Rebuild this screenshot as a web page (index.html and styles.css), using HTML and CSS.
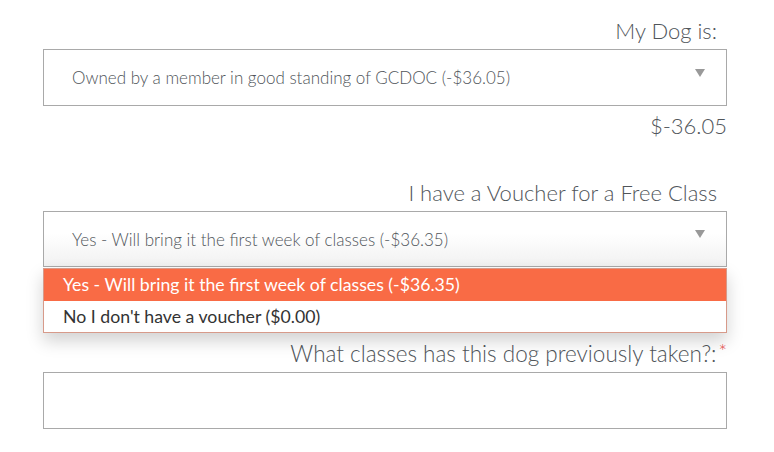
FILE: index.html
```html
<!DOCTYPE html>
<html lang="en">
<head>
    <meta charset="UTF-8">
    <title>Class Registration</title>
    <link rel="stylesheet" href="styles.css">
</head>
<body>

<div class="form">
    <div class="field">
        <div class="field-label">My Dog is:</div>
        <div class="select">
            <span>Owned by a member in good standing of GCDOC (-$36.05)</span>
            <span class="arrow"></span>
        </div>
        <div class="price">$-36.05</div>
    </div>

    <div class="field">
        <div class="field-label">I have a Voucher for a Free Class</div>
        <div class="select-wrap">
            <div class="select open">
                <span>Yes - Will bring it the first week of classes (-$36.35)</span>
                <span class="arrow"></span>
            </div>
            <ul class="options">
                <li class="selected">Yes - Will bring it the first week of classes (-$36.35)</li>
                <li>No I don't have a voucher ($0.00)</li>
            </ul>
        </div>
        <div class="price"></div>
    </div>

    <div class="field">
        <div class="field-label required">What classes has this dog previously taken?:<span class="req">*</span></div>
        <div class="textbox"></div>
    </div>
</div>

</body>
</html>
```

FILE: styles.css
```css
:root {
    --text: #50555a;
    --border: #a9a9a9;
    --orange: #f96b45;
}
body {
    margin: 0;
    background: #fff;
    color: var(--text);
    font-family: 'Lato', 'Liberation Sans', sans-serif;
}
.form {
    width: 684px;
    padding: 16px 0 0 43px;
}
.field-label {
    text-align: right;
    padding-right: 10px;
    font-size: 22px;
    font-weight: 300;
    line-height: 30px;
    margin-bottom: 3px;
}
.field-label.required { padding-right: 0; font-size: 22.5px; }
.req { color: #e8413f; font-size: 20px; vertical-align: top; margin-left: 2px; line-height: 24px; }
.select {
    box-sizing: border-box;
    height: 57px;
    border: 1px solid var(--border);
    display: flex;
    align-items: center;
    justify-content: space-between;
    padding: 0 21px 0 28px;
    font-size: 17px;
    font-weight: 300;
}
.select.open {
    height: 56px;
    background: linear-gradient(#fff 40%, #f1f1f1);
}
.arrow {
    width: 0;
    height: 0;
    border-left: 5px solid transparent;
    border-right: 5px solid transparent;
    border-top: 8px solid #999;
    margin-bottom: 10px;
}
.select-wrap { position: relative; }
.options {
    position: absolute;
    top: 57px;
    left: 0;
    right: 0;
    margin: 0;
    padding: 0;
    list-style: none;
    background: #fff;
    border: 1px solid #d79a8a;
    box-shadow: 0 8px 16px rgba(0, 0, 0, 0.18);
    z-index: 2;
}
.options li {
    height: 32px;
    line-height: 32px;
    padding-left: 19px;
    font-size: 17.7px;
    color: #333;
}
.options li + li { height: 31px; line-height: 31px; }
.options li.selected { background: var(--orange); color: #fff; }
.price {
    text-align: right;
    font-size: 22px;
    font-weight: 300;
    height: 30px;
    line-height: 30px;
    margin: 5px 0 37px;
}
.textbox {
    box-sizing: border-box;
    height: 57px;
    border: 1px solid var(--border);
}
```
